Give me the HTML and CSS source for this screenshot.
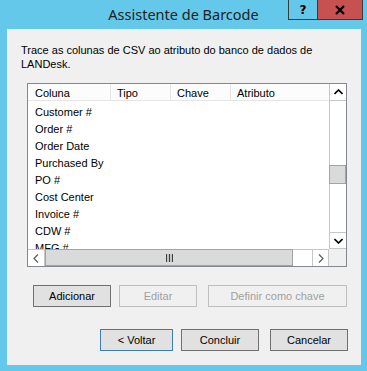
FILE: index.html
```html
<!DOCTYPE html>
<html lang="pt">
<head>
  <meta charset="UTF-8" />
  <title>Assistente de Barcode</title>
  <link rel="stylesheet" href="styles.css">
</head>
<body>
  <div class="window">
    <div class="titlebar">
      <span class="title">Assistente de Barcode</span>
      <div class="caption-buttons">
        <div class="cap-btn help">?</div>
        <div class="cap-btn close">
          <svg width="12" height="10" viewBox="0 0 12 10"><path d="M2 1 L10 9 M10 1 L2 9" stroke="#000" stroke-width="2.2" fill="none"/></svg>
        </div>
      </div>
    </div>
    <div class="client">
      <p class="intro">Trace as colunas de CSV ao atributo do banco de dados de LANDesk.</p>

      <div class="listview">
        <div class="lv-main">
          <div class="lv-content">
            <div class="lv-header">
              <div class="col c1">Coluna</div>
              <div class="col c2">Tipo</div>
              <div class="col c3">Chave</div>
              <div class="col c4">Atributo</div>
            </div>
            <div class="lv-rows">
              <div class="row">Customer #</div>
              <div class="row">Order #</div>
              <div class="row">Order Date</div>
              <div class="row">Purchased By</div>
              <div class="row">PO #</div>
              <div class="row">Cost Center</div>
              <div class="row">Invoice #</div>
              <div class="row">CDW #</div>
              <div class="row">MFG #</div>
            </div>
          </div>
          <div class="vscroll">
            <div class="sb-btn">
              <svg width="9" height="6" viewBox="0 0 9 6"><path d="M0.5 5 L4.5 1 L8.5 5" stroke="#000" stroke-width="1.6" fill="none"/></svg>
            </div>
            <div class="sb-track v-top"></div>
            <div class="sb-thumb v-thumb"></div>
            <div class="sb-track v-bottom"></div>
            <div class="sb-btn">
              <svg width="9" height="6" viewBox="0 0 9 6"><path d="M0.5 1 L4.5 5 L8.5 1" stroke="#000" stroke-width="1.6" fill="none"/></svg>
            </div>
          </div>
        </div>
        <div class="lv-bottom">
          <div class="hscroll">
            <div class="sb-btn">
              <svg width="6" height="9" viewBox="0 0 6 9"><path d="M5 0.5 L1 4.5 L5 8.5" stroke="#606060" stroke-width="1.3" fill="none"/></svg>
            </div>
            <div class="sb-thumb h-thumb">
              <svg width="7" height="8" viewBox="0 0 7 8"><path d="M0.5 0 V8 M3.5 0 V8 M6.5 0 V8" stroke="#404040" stroke-width="1.3"/></svg>
            </div>
            <div class="sb-track h-rest"></div>
            <div class="sb-btn">
              <svg width="6" height="9" viewBox="0 0 6 9"><path d="M1 0.5 L5 4.5 L1 8.5" stroke="#606060" stroke-width="1.3" fill="none"/></svg>
            </div>
          </div>
          <div class="corner"></div>
        </div>
      </div>

      <div class="actions">
        <button class="btn add">Adicionar</button>
        <button class="btn edit" disabled>Editar</button>
        <button class="btn key" disabled>Definir como chave</button>
      </div>

      <div class="nav-buttons">
        <button class="btn back">&lt; Voltar</button>
        <button class="btn finish">Concluir</button>
        <button class="btn cancel">Cancelar</button>
      </div>
    </div>
  </div>
</body>
</html>
```

FILE: styles.css
```css
body { margin: 0; background: #64c8ea; font-family: "Liberation Sans", Arial, sans-serif; font-size: 11px; color: #000; }
.window { width: 367px; height: 371px; display: flex; flex-direction: column; }
.titlebar { position: relative; height: 29px; display: flex; justify-content: center; align-items: center; }
.title { font-family: "Noto Sans", sans-serif; font-size: 14.5px; color: #1e1e1e; margin-top: -2px; }
.caption-buttons { position: absolute; top: 0; left: 288px; display: flex; }
.cap-btn { height: 20px; display: flex; align-items: center; justify-content: center; box-sizing: border-box; border: 1px solid #3a3a3a; border-top: none; }
.cap-btn.help { width: 29px; font-weight: bold; font-family: "DejaVu Sans", sans-serif; font-size: 12px; border-right: none; }
.cap-btn.close { width: 46px; background: #c75050; }

.client { margin: 0 6px 6px 7px; flex: 1; background: #f0f0f0; display: flex; flex-direction: column; padding: 0 13px 14px 14px; }
.intro { margin: 14px 0 12px 0; line-height: 14px; width: 310px; }

.listview { width: 320px; height: 184px; margin-left: 6px; box-sizing: border-box; border: 1px solid #828790; background: #fff; display: flex; flex-direction: column; }
.lv-main { flex: 1; display: flex; min-height: 0; }
.lv-content { flex: 1; overflow: hidden; }
.lv-header { display: flex; height: 17px; border-bottom: 1px solid #e5e5e5; box-sizing: border-box; background: #fcfcfc; }
.col { box-sizing: border-box; padding: 2px 0 0 6px; line-height: 15px; border-right: 1px solid #e5e5e5; }
.c1 { width: 83px; padding-left: 7px; }
.c2 { width: 60px; }
.c3 { width: 60px; }
.c4 { width: 98px; border-right: none; }
.lv-rows { padding-top: 3px; }
.row { height: 17px; line-height: 17px; padding-left: 7px; color: #000; }

.vscroll { width: 17px; box-sizing: border-box; border-left: 1px solid #c6c6c6; display: flex; flex-direction: column; }
.sb-btn { width: 16px; height: 17px; box-sizing: border-box; display: flex; align-items: center; justify-content: center; flex: none; }
.vscroll .sb-btn:first-child { border-bottom: 1px solid #c6c6c6; }
.vscroll .sb-btn:last-child { border-top: 1px solid #c6c6c6; border-bottom: 1px solid #c6c6c6; }
.sb-track { background: #fff; }
.v-top { height: 64px; }
.sb-thumb { background: #dadada; box-sizing: border-box; border: 1px solid #a3a3a3; }
.v-thumb { height: 19px; margin-left: -1px; width: 17px; }
.v-bottom { flex: 1; }

.lv-bottom { height: 17px; display: flex; flex: none; }
.hscroll { width: 301px; display: flex; box-sizing: border-box; border-top: 1px solid #c6c6c6; }
.hscroll .sb-btn { width: 17px; height: 16px; }
.hscroll .sb-btn:first-child { border-right: 1px solid #c6c6c6; }
.hscroll .sb-btn:last-child { border-left: 1px solid #c6c6c6; border-right: 1px solid #c6c6c6; }
.h-thumb { width: 248px; height: 17px; margin-top: -1px; display: flex; align-items: center; justify-content: center; }
.h-rest { flex: 1; }
.corner { flex: 1; background: #f0f0f0; }

.btn { font-family: "Liberation Sans", Arial, sans-serif; font-size: 11px; height: 22px; box-sizing: border-box; background: #e1e1e1; border: 1px solid #adadad; color: #000; padding: 0; margin: 0; }
.actions { display: flex; margin: 18px 0 0 12px; }
.add { width: 78px; border-color: #707070; }
.edit { width: 78px; margin-left: 8px; }
.key { width: 139px; margin-left: 11px; }
.btn:disabled { background: #f0f0f0; border-color: #bfbfbf; color: #a0a0a0; }

.nav-buttons { display: flex; justify-content: flex-end; margin-top: auto; }
.back { width: 73px; border-color: #3c7fb1; }
.finish { width: 78px; margin-left: 8px; border-color: #707070; }
.cancel { width: 78px; margin-left: 11px; border-color: #707070; }
```
